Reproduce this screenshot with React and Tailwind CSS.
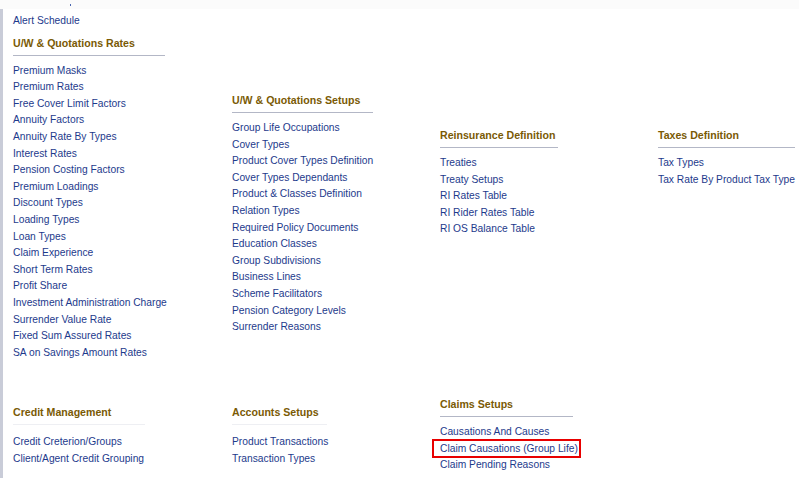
import React from "react";

const col1 = [
  "Premium Masks","Premium Rates","Free Cover Limit Factors","Annuity Factors","Annuity Rate By Types","Interest Rates","Pension Costing Factors","Premium Loadings","Discount Types","Loading Types","Loan Types","Claim Experience","Short Term Rates","Profit Share","Investment Administration Charge","Surrender Value Rate","Fixed Sum Assured Rates","SA on Savings Amount Rates",
];
const col2 = [
  "Group Life Occupations","Cover Types","Product Cover Types Definition","Cover Types Dependants","Product & Classes Definition","Relation Types","Required Policy Documents","Education Classes","Group Subdivisions","Business Lines","Scheme Facilitators","Pension Category Levels","Surrender Reasons",
];
const col3 = ["Treaties","Treaty Setups","RI Rates Table","RI Rider Rates Table","RI OS Balance Table"];
const col4 = ["Tax Types","Tax Rate By Product Tax Type"];

function Heading({ children, w, light }) {
  return (
    <div>
      <div className="font-bold text-[10.6px] text-[#7a5a05] leading-[16px] h-[16px]">{children}</div>
      <div className={`mt-[4px] h-px ${light ? "bg-[#eeeff3]" : "bg-[#b3b7c6]"} ${w}`} />
    </div>
  );
}

function Links({ items, highlight }) {
  return (
    <div className="flex flex-col">
      {items.map((t) => (
        <div key={t} className="h-[16.6px] leading-[16.6px] text-[#1d3a8c] whitespace-nowrap">
          {t === highlight ? (
            <span className="inline-block align-top -ml-[8px] -mt-[2px] h-[19px] leading-[16px] border-2 border-[#e80000] pl-[6px] pr-[1px]">
              {t}
            </span>
          ) : (
            t
          )}
        </div>
      ))}
    </div>
  );
}

export default function App() {
  return (
    <div
      className="w-[799px] h-[478px] overflow-hidden bg-white text-[10.25px] flex flex-col"
      style={{ fontFamily: '"Liberation Sans", Arial, sans-serif' }}
    >
      <div className="h-[9px] bg-[#fbfbfb] flex shrink-0">
        <div className="ml-[70px] mt-[4px] w-px h-[2px] bg-[#4a66b0]" />
      </div>
      <div className="flex flex-1">
        <div className="w-[3px] bg-[#c9ccd8] shrink-0" />
        <div className="flex-1 pl-[10px] flex flex-col">
          {/* top row */}
          <div className="flex">
            <div className="w-[219px] shrink-0 pt-[4px]">
              <Links items={["Alert Schedule"]} />
              <div className="mt-[5px]">
                <Heading w="w-[152px]">U/W &amp; Quotations Rates</Heading>
              </div>
              <div className="mt-[7px]">
                <Links items={col1} />
              </div>
            </div>
            <div className="w-[208px] shrink-0 pt-[83px]">
              <Heading w="w-[141px]">U/W &amp; Quotations Setups</Heading>
              <div className="mt-[7px]">
                <Links items={col2} />
              </div>
            </div>
            <div className="w-[218px] shrink-0 pt-[118px]">
              <Heading w="w-[118px]">Reinsurance Definition</Heading>
              <div className="mt-[7px]">
                <Links items={col3} />
              </div>
            </div>
            <div className="flex-1 pt-[118px]">
              <Heading w="w-[137px]">Taxes Definition</Heading>
              <div className="mt-[7px]">
                <Links items={col4} />
              </div>
            </div>
          </div>
          {/* bottom row */}
          <div className="flex mt-[35px]">
            <div className="w-[219px] shrink-0 pt-[8px]">
              <Heading w="w-[132px]" light>Credit Management</Heading>
              <div className="mt-[9px]">
                <Links items={["Credit Creterion/Groups", "Client/Agent Credit Grouping"]} />
              </div>
            </div>
            <div className="w-[208px] shrink-0 pt-[8px]">
              <Heading w="w-[95px]" light>Accounts Setups</Heading>
              <div className="mt-[9px]">
                <Links items={["Product Transactions", "Transaction Types"]} />
              </div>
            </div>
            <div className="w-[218px] shrink-0">
              <Heading w="w-[133px]">Claims Setups</Heading>
              <div className="mt-[7px]">
                <Links
                  items={["Causations And Causes", "Claim Causations (Group Life)", "Claim Pending Reasons"]}
                  highlight="Claim Causations (Group Life)"
                />
              </div>
            </div>
          </div>
        </div>
      </div>
    </div>
  );
}
